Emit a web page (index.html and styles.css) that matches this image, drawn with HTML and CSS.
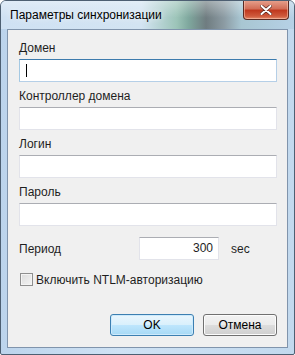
FILE: index.html
```html
<!DOCTYPE html>
<html lang="ru">
  <head>
    <meta charset="UTF-8" />
    <title>Параметры синхронизации</title>
    <link rel="stylesheet" href="styles.css">
  </head>
  <body>
    <div class="window">
      <div class="titlebar">
        <span class="title">Параметры синхронизации</span>
        <button class="close" aria-label="Закрыть">
          <svg width="12" height="10" viewBox="0 0 12 10">
            <path d="M1.5 1 L10.5 9 M10.5 1 L1.5 9" stroke="#5a2a20" stroke-width="3.4" stroke-linecap="round" />
            <path d="M1.5 1 L10.5 9 M10.5 1 L1.5 9" stroke="#ffffff" stroke-width="2" stroke-linecap="round" />
          </svg>
        </button>
      </div>

      <div class="client">
        <label class="field-label">Домен</label>
        <div class="textbox focused"><span class="caret"></span></div>

        <label class="field-label">Контроллер домена</label>
        <div class="textbox"></div>

        <label class="field-label">Логин</label>
        <div class="textbox"></div>

        <label class="field-label">Пароль</label>
        <div class="textbox"></div>

        <div class="period-row">
          <span class="period-label">Период</span>
          <div class="textbox period">300</div>
          <span class="unit">sec</span>
        </div>

        <div class="check-row">
          <span class="checkbox"></span>
          <span>Включить NTLM-авторизацию</span>
        </div>

        <div class="buttons">
          <button class="btn default">OK</button>
          <button class="btn">Отмена</button>
        </div>
      </div>
    </div>
  </body>
</html>
```

FILE: styles.css
```css
body {
  margin: 0;
  padding: 0;
  background-color: #ffffff;
  font-family: "Liberation Sans", Arial, sans-serif;
  font-size: 12px;
  color: #1e1e1e;
}

.window {
  width: 293px;
  height: 353px;
  border: 1px solid #4d5f72;
  border-radius: 6px 6px 2px 2px;
  background: linear-gradient(to right, #bcd4ec 0%, #cfe2f4 40%, #c2d9ee 100%);
  display: flex;
  flex-direction: column;
  overflow: hidden;
}

.titlebar {
  height: 28px;
  display: flex;
  align-items: flex-start;
  justify-content: space-between;
  background:
    linear-gradient(to bottom, rgba(255, 255, 255, 0.35), rgba(255, 255, 255, 0) 60%),
    linear-gradient(to right, #cfe1f3 0%, #d3e4f2 48%, #9cc4b8 60%, #7fa89e 64%, #6f7c80 70%, #8b9aa2 76%, #a8c6d2 82%, #b6d1e6 100%);
}

.title {
  margin: 7px 0 0 9px;
  font-size: 12px;
  color: #000000;
  text-shadow: 0 0 6px rgba(255, 255, 255, 0.9);
}

.close {
  width: 46px;
  height: 20px;
  margin: -1px 5px 0 0;
  padding: 0;
  border: 1px solid #5a2a22;
  border-top: none;
  border-radius: 0 0 4px 4px;
  background: linear-gradient(to bottom, #e8a490 0%, #d26f58 45%, #c0391f 55%, #cf5a3c 85%, #e38a6a 100%);
  box-shadow: inset 0 0 0 1px rgba(255, 210, 190, 0.5);
  display: flex;
  align-items: center;
  justify-content: center;
}

.client {
  flex: 1;
  margin: 0 6px 6px 6px;
  border: 1px solid #8094ac;
  background-color: #f0f0f0;
  padding: 11px 10px 0 11px;
  display: flex;
  flex-direction: column;
}

.field-label {
  display: block;
  height: 15px;
  line-height: 15px;
  margin-bottom: 3px;
}

.textbox {
  height: 21px;
  border: 1px solid #e2e3ea;
  border-top-color: #abadb3;
  background-color: #ffffff;
  margin-bottom: 7px;
  box-sizing: content-box;
  position: relative;
}

.textbox.focused {
  border-color: #b5cfe7;
  border-top-color: #3d7bad;
  border-left-color: #a4c9e3;
}

.caret {
  position: absolute;
  left: 6px;
  top: 4px;
  width: 1px;
  height: 13px;
  background-color: #000000;
}

.period-row {
  display: flex;
  align-items: center;
  margin-top: 4px;
  height: 23px;
}

.period-label {
  width: 120px;
}

.textbox.period {
  width: 73px;
  margin: 0;
  text-align: right;
  line-height: 21px;
  padding-right: 5px;
}

.unit {
  margin-left: 12px;
}

.check-row {
  display: flex;
  align-items: center;
  gap: 3px;
  margin-top: 12px;
  height: 15px;
}

.checkbox {
  width: 11px;
  height: 11px;
  border: 1px solid #8f8f8f;
  background: linear-gradient(135deg, #dcdcdc 0%, #f4f4f4 100%);
  box-shadow: inset 0 0 0 1px #f4f4f4;
  margin-left: 1px;
}

.buttons {
  display: flex;
  justify-content: flex-end;
  gap: 9px;
  margin-top: 27px;
}

.btn {
  height: 22px;
  padding: 0;
  font-family: "Liberation Sans", Arial, sans-serif;
  font-size: 12px;
  color: #000000;
  border: 1px solid #707070;
  border-radius: 3px;
  background: linear-gradient(to bottom, #f2f2f2 0%, #ebebeb 49%, #dddddd 50%, #cfcfcf 100%);
  box-shadow: inset 0 0 0 1px #fcfcfc;
  width: 74px;
}

.btn.default {
  width: 84px;
  border-color: #3c7fb1;
  background: linear-gradient(to bottom, #eaf6fd 0%, #d9f0fc 49%, #bee6fd 50%, #a7d9f5 100%);
  box-shadow: inset 0 0 0 1px #cdeafc;
}
```
